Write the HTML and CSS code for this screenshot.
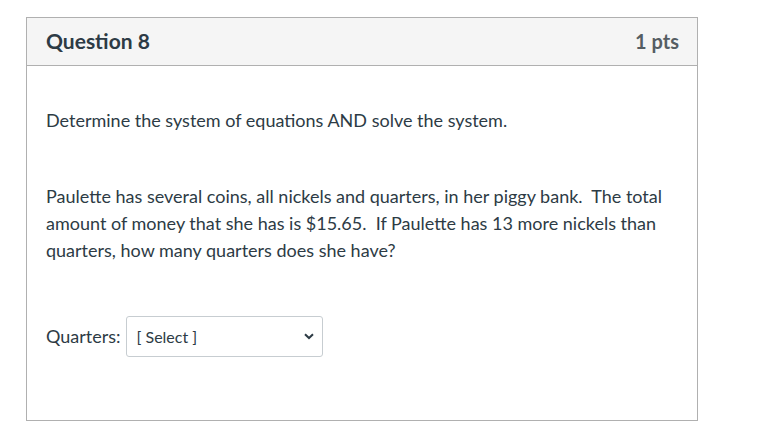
FILE: index.html
```html
<!DOCTYPE html>
<html>
<head>
<meta charset="utf-8">
<link rel="stylesheet" href="styles.css">
</head>
<body>
<div class="card">
  <div class="card-header">
    <span class="title">Question 8</span>
    <span class="pts">1 pts</span>
  </div>
  <div class="card-body">
    <p class="line1">Determine the system of equations AND solve the system.</p>
    <p class="para">Paulette has several coins, all nickels and quarters, in her piggy bank.&nbsp; The total amount of money that she has is $15.65.&nbsp; If Paulette has 13 more nickels than quarters, how many quarters does she have?</p>
    <div class="answer">
      <span class="label">Quarters:</span>
      <div class="select">
        <span>[ Select ]</span>
        <svg width="10" height="7" viewBox="0 0 10 7"><path d="M1 1.2 L5 5 L9 1.2" fill="none" stroke="#2d3b45" stroke-width="2"/></svg>
      </div>
    </div>
  </div>
</div>
</body>
</html>
```

FILE: styles.css
```css
html, body { margin: 0; padding: 0; background: #fff; }
body { font-family: Lato, "Noto Sans", sans-serif; color: #2d3b45; }
.card {
  margin: 17px 0 0 26px;
  width: 670px;
  height: 402px;
  border: 1px solid #b0b0b0;
  display: flex;
  flex-direction: column;
}
.card-header {
  height: 47px;
  background: #f5f5f5;
  border-bottom: 1px solid #b0b0b0;
  display: flex;
  align-items: center;
  justify-content: space-between;
  padding: 0 18px 0 19px;
}
.title { font-size: 21px; font-weight: 700; color: #2d3b45; margin-top: -2px; }
.pts { font-size: 20px; font-weight: 700; color: #555d63; margin-top: -1px; }
.card-body { padding: 0 19px; font-size: 18px; line-height: 27px; }
.line1 { margin: 41px 0 0 0; }
.para { margin: 49px 0 0 0; width: 632px; }
.answer { display: flex; align-items: center; margin-top: 52px; gap: 5px; }
.select {
  border: 1px solid #c7cdd1;
  border-radius: 3px;
  display: flex;
  align-items: center;
  justify-content: space-between;
  padding: 0 8px 0 10px;
  box-sizing: border-box;
  width: 197px;
  height: 41px;
  font-size: 16px;
}
.select svg { display: block; }
```
